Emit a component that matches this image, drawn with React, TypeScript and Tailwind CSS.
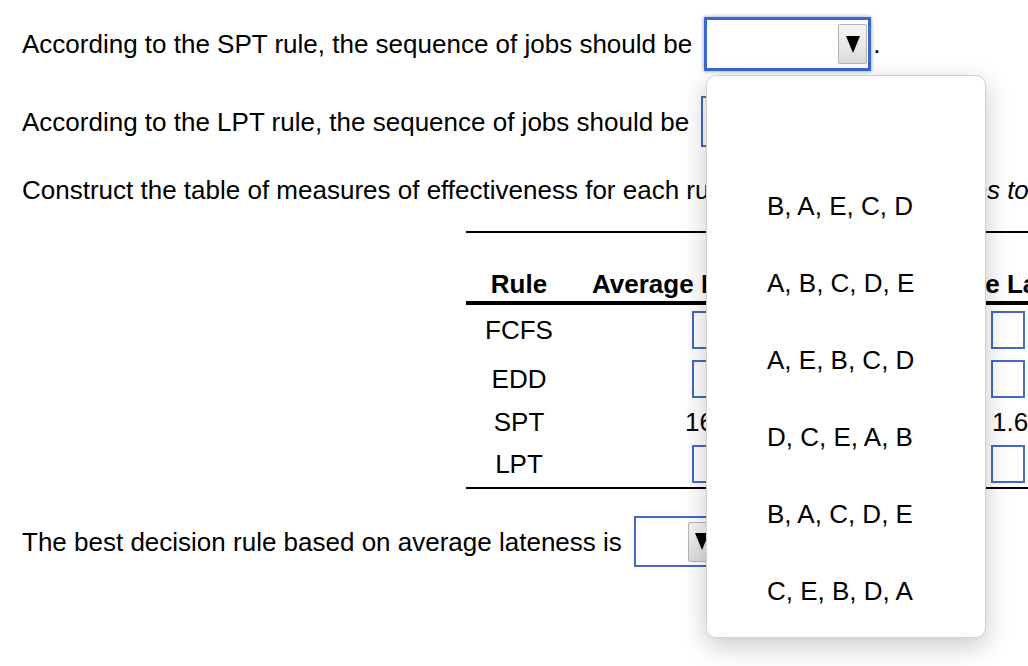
import clsx from 'clsx';

const font = { fontFamily: '"Liberation Sans", Arial, Helvetica, sans-serif' };

function Caret() {
  return (
    <svg width="14" height="17" viewBox="0 0 14 17" aria-hidden>
      <polygon points="0,0 14,0 7,17" fill="#000" />
    </svg>
  );
}

function SelectBox({ focused, narrow }: { focused?: boolean; narrow?: boolean }) {
  return (
    <div
      className={clsx(
        'flex shrink-0 items-center justify-end bg-white',
        focused
          ? 'h-[54px] border-[3px] border-[#3d67c9] shadow-[0_0_4px_#7d9de2]'
          : 'h-[51px] border-2 border-[#4169c6]',
        narrow ? 'w-[87px] pr-[2px]' : 'w-[167px] pr-[1px]'
      )}
    >
      <div className="flex h-[40px] w-[29px] items-center justify-center rounded-[2px] border border-[#b4b4b4] bg-gradient-to-b from-[#f6f6f6] to-[#dcdcdc]">
        <Caret />
      </div>
    </div>
  );
}

function InputBox() {
  return <div className="h-[38px] w-[34px] border-2 border-[#4169c6] bg-white" />;
}

type Row = { rule: string; h: string; flow?: string; late?: string };

const rows: Row[] = [
  { rule: 'FCFS', h: 'h-[50px]' },
  { rule: 'EDD', h: 'h-[48px]' },
  { rule: 'SPT', h: 'h-[37px]', flow: '16.60', late: '1.60' },
  { rule: 'LPT', h: 'h-[47px]' },
];

const options = ['', 'B, A, E, C, D', 'A, B, C, D, E', 'A, E, B, C, D', 'D, C, E, A, B', 'B, A, C, D, E', 'C, E, B, D, A'];

export default function App() {
  return (
    <div className="relative h-[666px] w-[1028px] overflow-hidden bg-white text-[26px] leading-[30px] text-black" style={font}>
      <div className="whitespace-nowrap pl-[22px] pt-[17px]">
        <div className="flex h-[54px] items-center">
          <span>According to the SPT rule, the sequence of jobs should be</span>
          <span className="ml-[12px]">
            <SelectBox focused />
          </span>
          <span className="ml-[2px]">.</span>
        </div>

        <div className="mt-[25px] flex h-[51px] items-center">
          <span>According to the LPT rule, the sequence of jobs should be</span>
          <span className="ml-[12px]">
            <SelectBox />
          </span>
          <span className="ml-[2px]">.</span>
        </div>

        <div className="mt-[28px] h-[30px]">
          Construct the table of measures of effectiveness for each rule.{' '}
          <i>(Enter your responses to two decimal places.)</i>
        </div>

        {/* table */}
        <div className="ml-[444px] mt-[26px] w-[720px]">
          <div className="h-[2px] bg-black" />
          <div className="flex h-[68px] items-end pb-[2px] font-bold">
            <div className="w-[106px] text-center">Rule</div>
            <div className="w-[308px] pl-[20px]">Average Flow Time</div>
            <div className="pl-[18px]">Average Lateness</div>
          </div>
          <div className="h-[4px] bg-black" />
          {rows.map((r) => (
            <div key={r.rule} className={clsx('flex items-center', r.h)}>
              <div className="w-[106px] text-center">{r.rule}</div>
              <div className={clsx('w-[308px]', r.flow ? 'pl-[113px]' : 'pl-[120px]')}>
                {r.flow ?? <InputBox />}
              </div>
              <div className={r.late ? 'pl-[112px]' : 'pl-[111px]'}>{r.late ?? <InputBox />}</div>
            </div>
          ))}
          <div className="h-[2px] bg-black" />
        </div>

        <div className="mt-[27px] flex h-[51px] items-center">
          <span>The best decision rule based on average lateness is</span>
          <span className="ml-[12px]">
            <SelectBox narrow />
          </span>
        </div>
      </div>

      {/* open dropdown list */}
      <div className="absolute left-[706px] top-[75px] h-[563px] w-[280px] rounded-[10px] border border-[#d2d2d2] bg-white pt-[14px] shadow-[0_8px_26px_rgba(0,0,0,0.22)]">
        {options.map((o, i) => (
          <div key={i} className="flex h-[77px] items-center whitespace-nowrap pl-[60px]">
            {o}
          </div>
        ))}
      </div>
    </div>
  );
}
